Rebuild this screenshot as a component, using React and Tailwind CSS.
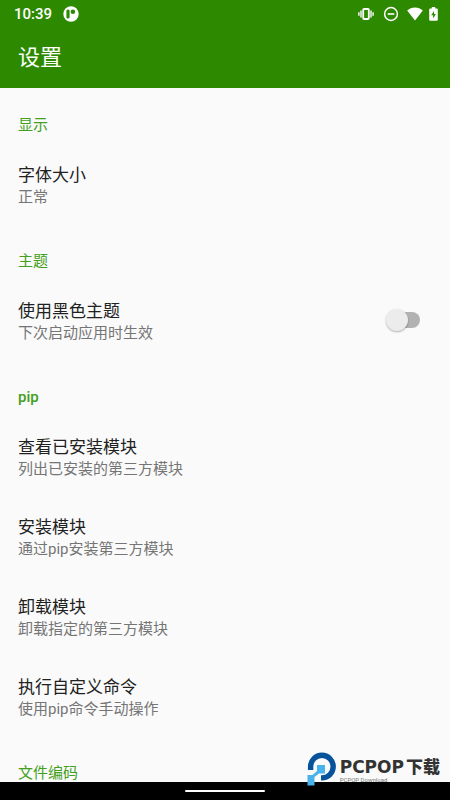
import React, { useState } from "react";

const sections = [
  {
    title: "显示",
    items: [{ title: "字体大小", summary: "正常" }],
  },
  {
    title: "主题",
    items: [
      { title: "使用黑色主题", summary: "下次启动应用时生效", toggle: true },
    ],
  },
  {
    title: "pip",
    latin: true,
    items: [
      { title: "查看已安装模块", summary: "列出已安装的第三方模块" },
      { title: "安装模块", summary: "通过pip安装第三方模块" },
      { title: "卸载模块", summary: "卸载指定的第三方模块" },
      { title: "执行自定义命令", summary: "使用pip命令手动操作" },
    ],
  },
  { title: "文件编码", items: [] },
];

const StatusBar = () => (
  <div className="flex items-center h-7 pl-[14px] pr-3 text-white">
    <span className="text-[15px] leading-5 font-medium">10:39</span>
    <svg className="w-4 h-4 ml-[11px]" viewBox="0 0 16 16">
      <circle cx="8" cy="8" r="7.7" fill="#fff" />
      <rect x="3.4" y="3.4" width="3.2" height="9.2" rx="1.5" fill="#2d8a00" />
      <circle cx="9.9" cy="5.8" r="2.3" fill="#2d8a00" />
    </svg>
    <div className="flex items-center ml-auto">
      {/* vibrate */}
      <svg className="w-4 h-4" viewBox="0 0 16 16" fill="none" stroke="#fff">
        <rect x="5.2" y="3" width="5.6" height="10" rx="0.8" strokeWidth="1.8" />
        <path d="M3 4.5v7M13 4.5v7M0.9 6.2v3.6M15.1 6.2v3.6" strokeWidth="1.4" />
      </svg>
      {/* do not disturb */}
      <svg className="w-4 h-4 ml-[9px]" viewBox="0 0 16 16" fill="none" stroke="#fff">
        <circle cx="8" cy="8" r="6.4" strokeWidth="1.5" />
        <path d="M4.700 8h6.600" strokeWidth="1.6" />
      </svg>
      {/* wifi */}
      <svg className="w-4 h-4 ml-2" viewBox="0 0 16 16">
        <path d="M8 14.400L0.200 4.600C2.400 2.600 5 1.600 8 1.600s5.600 1 7.800 3z" fill="#fff" />
      </svg>
      {/* battery */}
      <svg className="w-[9px] h-4 ml-[6px]" viewBox="0 0 9 16">
        <path
          d="M2.800 1h3.400v1.500h1.600q1 0 1 1v10.300q0 1-1 1H1.200q-1 0-1-1V3.500q0-1 1-1h1.600z"
          fill="#fff"
        />
        <path d="M5 5L2.200 9.200h1.900v3.200L6.900 8.100H5z" fill="#2d8a00" />
      </svg>
    </div>
  </div>
);

const Summary = ({ item }) => (
  <span className="flex flex-col items-start pt-[2px]">
    <span className="text-[17px] leading-6 text-[#212121]">{item.title}</span>
    <span className="text-[15px] leading-5 text-[#757575]">
      {item.summary}
    </span>
  </span>
);

const ToggleRow = ({ item }) => {
  const [checked, setChecked] = useState(false);

  return (
    <label className="flex items-center justify-between w-full h-20 pl-[18px] pr-[30px] cursor-pointer">
      <Summary item={item} />
      <span className="relative flex items-center justify-end w-[34px] h-6">
        <input
          type="checkbox"
          role="switch"
          checked={checked}
          onChange={(e) => setChecked(e.target.checked)}
          className="peer appearance-none w-[30px] h-4 rounded-full bg-[#b2b2b2] checked:bg-[#8fc773] cursor-pointer"
        />
        <span className="absolute left-0 top-[1px] w-[22px] h-[22px] rounded-full bg-[#ececec] shadow-[0_1px_2px_rgba(0,0,0,0.3)] pointer-events-none peer-checked:translate-x-3 peer-checked:bg-[#2d8a00]" />
      </span>
    </label>
  );
};

const Row = ({ item }) => (
  <button
    type="button"
    className="flex items-center w-full h-20 px-[18px] text-left cursor-pointer"
  >
    <Summary item={item} />
  </button>
);

const Watermark = () => (
  <div className="absolute right-[10px] bottom-[14px] flex items-center pointer-events-none">
    <svg className="w-[30px] h-[34px]" viewBox="0 0 30 34">
      <path
        d="M3.600 18V14.600A11.300 11.300 0 1 1 14.900 25.900H14"
        fill="none"
        stroke="#06539c"
        strokeWidth="5.4"
      />
      <path d="M10 13h8v8.500h-6L7.500 25v8.500H0.500V23h5l4.500-4z" fill="#48b2ea" />
    </svg>
    <div className="flex flex-col pt-1 pl-[3px]">
      <span className="flex items-center gap-[2px] text-[17px] leading-[18px] text-[#333] font-black">
        <span className="font-['DejaVu_Sans',sans-serif]">PCPOP</span>
        <span>下载</span>
      </span>
      <span className="text-[6px] leading-2 text-[#777]">PCPOP Download</span>
    </div>
  </div>
);

const App = () => {
  return (
    <div className="relative flex flex-col h-screen overflow-hidden bg-[#fafafa] font-[Roboto,'Noto_Sans_CJK_SC',sans-serif]">
      <header className="shrink-0 bg-[#2d8a00]">
        <StatusBar />
        <div className="flex items-center h-[60px] px-[18px]">
          <h1 className="text-[22px] leading-8 text-white">设置</h1>
        </div>
      </header>

      <main className="flex-1 min-h-0 overflow-hidden">
        {sections.map((section) => (
          <section key={section.title}>
            <h2
              className={`h-14 pt-7 px-[18px] text-[15px] leading-[18px] text-[#43a01c] ${
                section.latin ? "font-medium" : "font-normal"
              }`}
            >
              {section.title}
            </h2>
            {section.items.map((item) =>
              item.toggle ? (
                <ToggleRow key={item.title} item={item} />
              ) : (
                <Row key={item.title} item={item} />
              )
            )}
          </section>
        ))}
      </main>

      <div className="flex items-center justify-center shrink-0 h-[18px] bg-black">
        <div className="w-20 h-[2px] rounded-full bg-white" />
      </div>

      <Watermark />
    </div>
  );
};

export default App;
